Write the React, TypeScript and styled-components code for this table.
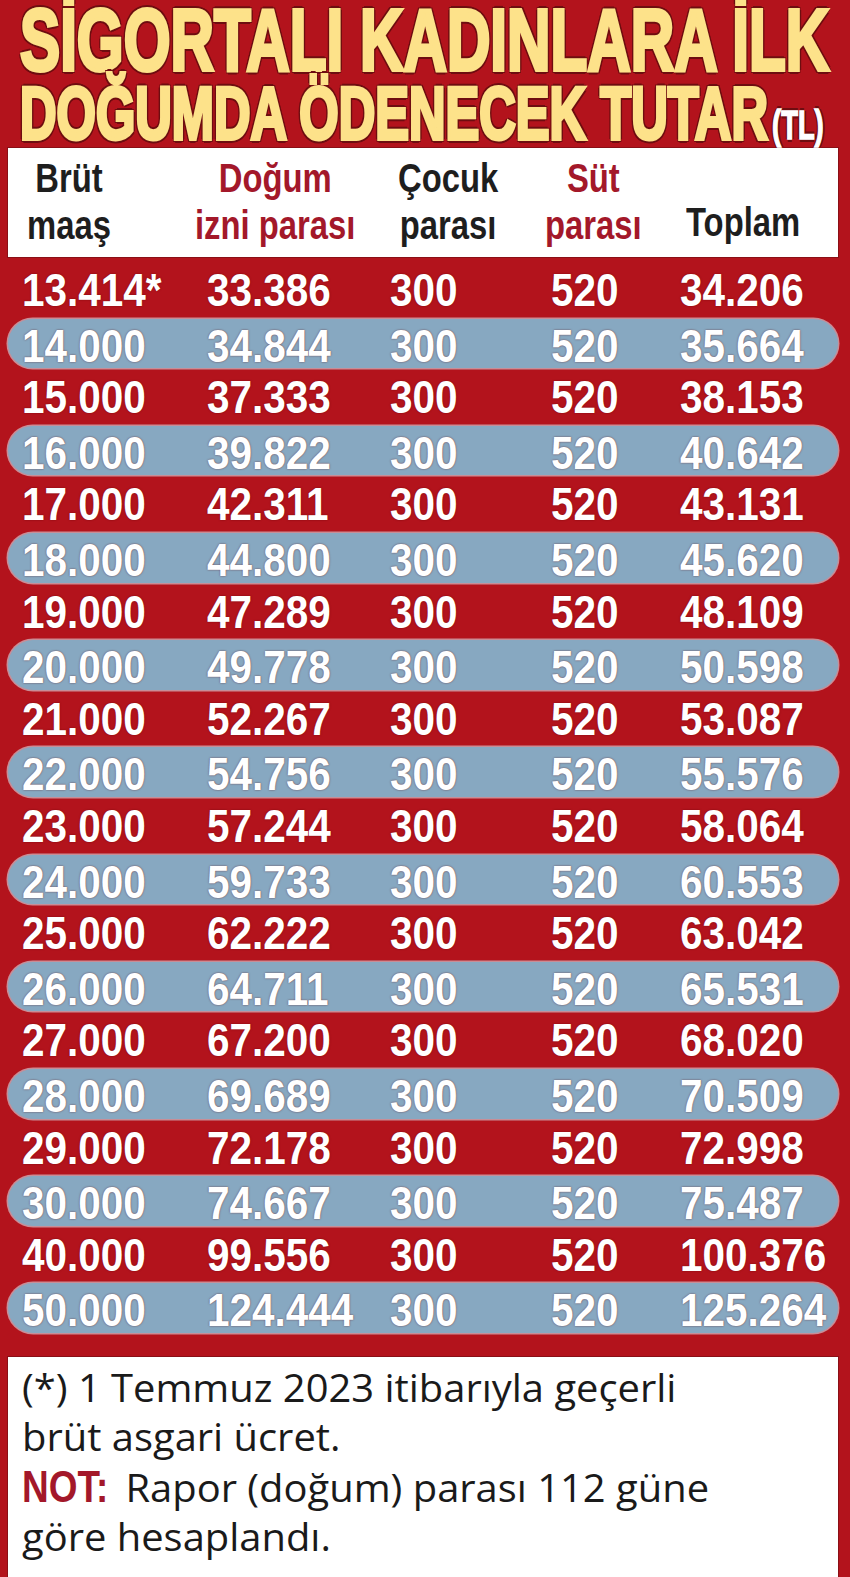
import styled, { createGlobalStyle } from "styled-components";

const rows: string[][] = [
  ["13.414*", "33.386", "300", "520", "34.206"],
  ["14.000", "34.844", "300", "520", "35.664"],
  ["15.000", "37.333", "300", "520", "38.153"],
  ["16.000", "39.822", "300", "520", "40.642"],
  ["17.000", "42.311", "300", "520", "43.131"],
  ["18.000", "44.800", "300", "520", "45.620"],
  ["19.000", "47.289", "300", "520", "48.109"],
  ["20.000", "49.778", "300", "520", "50.598"],
  ["21.000", "52.267", "300", "520", "53.087"],
  ["22.000", "54.756", "300", "520", "55.576"],
  ["23.000", "57.244", "300", "520", "58.064"],
  ["24.000", "59.733", "300", "520", "60.553"],
  ["25.000", "62.222", "300", "520", "63.042"],
  ["26.000", "64.711", "300", "520", "65.531"],
  ["27.000", "67.200", "300", "520", "68.020"],
  ["28.000", "69.689", "300", "520", "70.509"],
  ["29.000", "72.178", "300", "520", "72.998"],
  ["30.000", "74.667", "300", "520", "75.487"],
  ["40.000", "99.556", "300", "520", "100.376"],
  ["50.000", "124.444", "300", "520", "125.264"],
];

// shift = where the header text block starts, relative to the value column
const headers = [
  { lines: ["Brüt", "maaş"], red: false, shift: 5 },
  { lines: ["Doğum", "izni parası"], red: true, shift: -12 },
  { lines: ["Çocuk", "parası"], red: false, shift: 8 },
  { lines: ["Süt", "parası"], red: true, shift: -6 },
  { lines: ["Toplam"], red: false, shift: 6 },
];

const App = () => {
  return (
    <>
      <GlobalStyle />
      <Page>
        <Title>
          <TitleLine $size={88}>SİGORTALI KADINLARA İLK</TitleLine>
          <TitleLine $size={74}>
            DOĞUMDA ÖDENECEK TUTAR<Unit>(TL)</Unit>
          </TitleLine>
        </Title>

        <HeaderBox>
          {headers.map((h, i) => (
            <HeaderCell key={i} $red={h.red} $shift={h.shift} $single={h.lines.length === 1}>
              {h.lines.map(l => (
                <div key={l}>{l}</div>
              ))}
            </HeaderCell>
          ))}
        </HeaderBox>

        <Rows>
          {rows.map((r, i) => (
            <Row key={r[0]} $striped={i % 2 === 1}>
              {r.map((v, j) => (
                <Value key={j}>{v}</Value>
              ))}
            </Row>
          ))}
        </Rows>

        <Notes>
          <p>(*) 1 Temmuz 2023 itibarıyla geçerli</p>
          <p>brüt asgari ücret.</p>
          <p>
            <NoteLabel>NOT:</NoteLabel> Rapor (doğum) parası 112 güne
          </p>
          <p>göre hesaplandı.</p>
        </Notes>
      </Page>
    </>
  );
};

export default App;

const GlobalStyle = createGlobalStyle`
  html, body {
    margin: 0;
    padding: 0;
    background: #b3131c;
  }
  * {
    box-sizing: border-box;
  }
`;

const Page = styled.div`
  width: 850px;
  height: 1577px;
  background: #b3131c;
  padding: 0 12px 0 8px;
  overflow: hidden;
  font-family: "Liberation Sans", Arial, sans-serif;
`;

const Title = styled.div`
  padding-left: 12px;
  height: 148px;
  overflow: hidden;
`;

const outline = "#6e0d10";

const TitleLine = styled.div<{ $size: number }>`
  font-size: ${({ $size }) => $size}px;
  line-height: ${({ $size }) => ($size > 80 ? 80 : 68)}px;
  font-weight: 700;
  white-space: nowrap;
  color: #fde28a;
  -webkit-text-stroke: 4px #fde28a;
  text-shadow:
    4px 0 ${outline}, -4px 0 ${outline}, 0 4px ${outline}, 0 -4px ${outline},
    3px 3px ${outline}, -3px -3px ${outline}, 3px -3px ${outline}, -3px 3px ${outline};
  transform: scaleX(0.684);
  transform-origin: left center;
`;

const Unit = styled.span`
  font-size: 40px;
  color: #ffffff;
  -webkit-text-stroke: 1.5px #ffffff;
  text-shadow:
    3px 0 ${outline}, -3px 0 ${outline}, 0 3px ${outline}, 0 -3px ${outline};
  vertical-align: 0;
  margin-left: 6px;
`;

const HeaderBox = styled.div`
  background: #ffffff;
  height: 109px;
  display: grid;
  grid-template-columns: 185px 183px 161px 129px 1fr;
  padding: 7px 0 8px 14px;
  box-shadow: 0 0 0 1px #8a0f16;
`;

const HeaderCell = styled.div<{ $red: boolean; $shift: number; $single: boolean }>`
  justify-self: start;
  align-self: ${({ $single }) => ($single ? "end" : "start")};
  margin-left: ${({ $shift }) => $shift}px;
  text-align: center;
  white-space: nowrap;
  font-size: 41px;
  line-height: 47px;
  font-weight: 700;
  color: ${({ $red }) => ($red ? "#a3182a" : "#1e1e1e")};
  padding-bottom: ${({ $single }) => ($single ? "3px" : "0")};
  transform: scaleX(0.8);
  transform-origin: left center;
`;

const Rows = styled.div`
  display: flex;
  flex-direction: column;
  padding-top: 6px;
`;

const Row = styled.div<{ $striped: boolean }>`
  display: grid;
  grid-template-columns: 185px 183px 161px 129px 1fr;
  align-items: center;
  padding-left: 14px;
  border-radius: 26px;
  background: ${({ $striped }) => ($striped ? "#87a8c1" : "transparent")};
  box-shadow: ${({ $striped }) => ($striped ? "0 0 0 1.5px #c98d96" : "none")};
  margin: ${({ $striped }) => ($striped ? "2px 0" : "0")};
  height: ${({ $striped }) => ($striped ? "49.6px" : "53.6px")};
`;

const Value = styled.span`
  display: inline-block;
  justify-self: start;
  font-size: 46px;
  font-weight: 700;
  color: #ffffff;
  white-space: nowrap;
  text-shadow: 0 0 2px rgba(90, 0, 5, 0.7);
  transform: scaleX(0.88);
  transform-origin: left center;
`;

const Notes = styled.div`
  margin-top: 22px;
  background: #ffffff;
  height: 222px;
  padding: 6px 0 0 14px;
  box-shadow: 0 0 0 1px #8a0f16;
  font-family: "Open Sans", "Liberation Sans", sans-serif;
  font-size: 38px;
  line-height: 49.5px;
  color: #1a1a1a;

  p {
    margin: 0;
    white-space: nowrap;
    transform: scaleX(1.05);
    transform-origin: left center;
  }
`;

const NoteLabel = styled.span`
  font-family: "Liberation Sans", Arial, sans-serif;
  font-weight: 700;
  font-size: 44px;
  color: #a3182a;
  display: inline-block;
  transform: scaleX(0.8);
  transform-origin: left center;
  margin-right: -14px;
`;
